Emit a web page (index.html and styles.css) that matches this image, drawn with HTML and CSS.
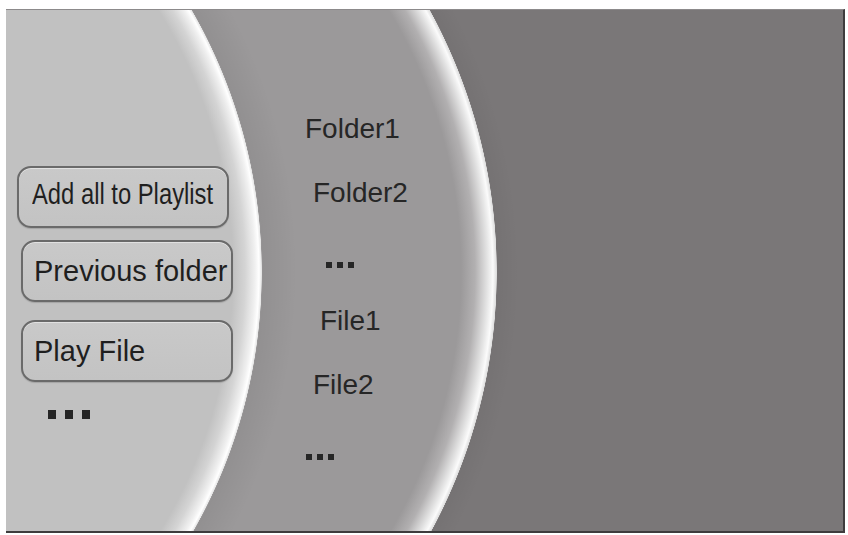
FILE: index.html
```html
<!DOCTYPE html>
<html lang="en">
<head>
<meta charset="UTF-8">
<meta name="viewport" content="width=device-width, initial-scale=1.0">
<title>File Browser</title>
<link rel="stylesheet" href="styles.css">
</head>
<body>
  <div class="screen">
    <!-- left pane: actions -->
    <div class="actions">
      <button class="btn btn-add"><span class="narrow">Add all to Playlist</span></button>
      <button class="btn">Previous folder</button>
      <button class="btn btn-play">Play File</button>
      <div class="dots dots-big"><i></i><i></i><i></i></div>
    </div>

    <!-- middle pane: folder / file list -->
    <div class="listing">
      <div class="entry">Folder1</div>
      <div class="entry">Folder2</div>
      <div class="entry dots"><i></i><i></i><i></i></div>
      <div class="entry">File1</div>
      <div class="entry">File2</div>
      <div class="entry dots"><i></i><i></i><i></i></div>
    </div>

    <!-- right pane stays empty (preview) -->
  </div>
</body>
</html>
```

FILE: styles.css
```css
body {
  margin: 0;
  padding: 0;
  background: #ffffff;
  font-family: "Liberation Sans", Arial, sans-serif;
}

.screen {
  margin: 9px 0 0 6px;
  width: 837px;
  height: 521px;
  display: flex;
  border-top: 1px solid #8c8a8b;
  border-right: 2px solid #3e3c3d;
  border-bottom: 2px solid #3e3c3d;
  background:
    /* left disc with its bright rim */
    radial-gradient(circle 525px at -269px 262px,
      #c1c1c1 0, #c1c1c1 496px, #d4d4d4 508px, #f0f0f0 518px, #ffffff 522px, #e6e6e6 524.5px, transparent 525px),
    /* soft shadow the left disc casts on the middle */
    radial-gradient(circle 560px at -269px 262px,
      transparent 0, transparent 524px, rgba(0, 0, 0, 0.06) 526px, transparent 560px),
    /* middle disc */
    radial-gradient(circle 546px at -55px 262px,
      #9b999a 0, #9b999a 510px, #b2b0b1 524px, #e6e6e6 537px, #fbfbfb 542px, #dedede 545.5px, transparent 546px),
    radial-gradient(circle 568px at -55px 262px,
      transparent 0, transparent 545px, rgba(0, 0, 0, 0.04) 547px, transparent 568px),
    #7a7778;
}

.actions {
  width: 290px;
  box-sizing: border-box;
  padding: 156px 0 0 15px;
  display: flex;
  flex-direction: column;
  align-items: flex-start;
}

.btn {
  width: 212px;
  height: 62px;
  margin: 0;
  padding: 0 0 0 11px;
  display: flex;
  align-items: center;
  font-family: inherit;
  font-size: 29px;
  color: #1f1f1f;
  text-align: left;
  white-space: nowrap;
  background: linear-gradient(#c9c9c9, #c3c3c3);
  border: 2px solid #6a6a6a;
  border-radius: 14px;
  box-shadow: inset 0 1px 0 rgba(255, 255, 255, 0.45), 0 1px 1px rgba(0, 0, 0, 0.15);
  cursor: pointer;
}

.btn-add {
  margin-left: -4px;
  margin-bottom: 12px;
  padding-left: 13px;
  padding-bottom: 6px;
}

.btn-play {
  margin-top: 18px;
}

.narrow {
  display: inline-block;
  transform: scaleX(0.82);
  transform-origin: left center;
}

.dots {
  display: flex;
  gap: 5px;
}

.dots i {
  display: block;
  width: 6px;
  height: 6px;
  background: #262626;
}

.dots-big {
  margin: 28px 0 0 27px;
  gap: 9px;
}

.dots-big i {
  width: 8px;
  height: 9px;
}

.listing {
  padding: 87px 0 0 9px;
  display: flex;
  flex-direction: column;
}

.entry {
  height: 64px;
  line-height: 64px;
  font-size: 28px;
  color: #262626;
}

.entry.dots {
  box-sizing: border-box;
  padding-top: 37px;
}

.entry:nth-child(2) { margin-left: 8px; }
.entry:nth-child(3) { margin-left: 21px; }
.entry:nth-child(4) { margin-left: 15px; }
.entry:nth-child(5) { margin-left: 8px; }
.entry:nth-child(6) { margin-left: 1px; }
```
